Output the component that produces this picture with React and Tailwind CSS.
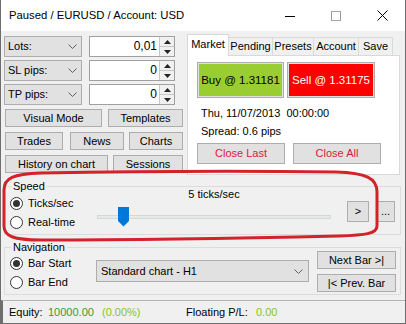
import React from "react";

function Chevron() {
  return (
    <svg width="9" height="5" viewBox="0 0 9 5">
      <path d="M0.5 0.5 L4.5 4.5 L8.5 0.5" stroke="#606060" strokeWidth="1" fill="none" />
    </svg>
  );
}

function Btn({ className = "", children }) {
  return (
    <div className={`flex items-center justify-center border border-[#adadad] bg-[#e1e1e1] ${className}`}>
      {children}
    </div>
  );
}

function Combo({ label }) {
  return (
    <div className="flex h-[21px] w-[78px] items-center justify-between border border-[#adadad] bg-[#e1e1e1] pl-[3px] pr-[4px]">
      <span>{label}</span>
      <Chevron />
    </div>
  );
}

function Spin({ value }) {
  return (
    <div className="flex h-[21px] w-[86px] border border-[#a0a0a0] bg-white">
      <div className="flex flex-1 items-center justify-end pr-[2px] text-[12px]">{value}</div>
      <div className="flex w-[15px] flex-col border-l border-[#c8c8c8]">
        <div className="flex flex-1 items-center justify-center border-b border-[#c8c8c8] bg-[#f0f0f0]">
          <svg width="7" height="4" viewBox="0 0 7 4">
            <path d="M0 4 L3.5 0 L7 4 Z" fill="#222" />
          </svg>
        </div>
        <div className="flex flex-1 items-center justify-center bg-[#f0f0f0]">
          <svg width="7" height="4" viewBox="0 0 7 4">
            <path d="M0 0 L3.5 4 L7 0 Z" fill="#222" />
          </svg>
        </div>
      </div>
    </div>
  );
}

function Radio({ checked, label }) {
  return (
    <div className="flex h-[19px] items-center">
      <div className="flex h-[13px] w-[13px] items-center justify-center rounded-full border border-[#333] bg-white">
        {checked && <div className="h-[7px] w-[7px] rounded-full bg-[#333]" />}
      </div>
      <span className="ml-[5px]">{label}</span>
    </div>
  );
}

function Tab({ active, width, children }) {
  if (active) {
    return (
      <div
        className="relative z-10 -mb-[1px] flex h-[22px] items-center justify-center border-x border-t border-[#d9d9d9] bg-white pb-[2px]"
        style={{ width }}
      >
        {children}
      </div>
    );
  }
  return (
    <div
      className="-ml-[1px] flex h-[18px] items-center justify-center border-x border-t border-[#d9d9d9] bg-[#f0f0f0] first:ml-0"
      style={{ width }}
    >
      {children}
    </div>
  );
}

export default function App() {
  return (
    <div className="relative h-[324px] w-[406px] overflow-hidden border-x border-b border-[#6e6e6e] bg-[#f0f0f0] font-[family-name:'Liberation_Sans',Arial,sans-serif] text-[11px] leading-[13px] text-black">
      {/* title bar */}
      <div className="flex h-[31px] items-center bg-white">
        <div className="flex-1 pl-[8px] text-[11.3px]">Paused / EURUSD / Account: USD</div>
        <div className="flex h-full">
          <div className="flex w-[46px] items-center justify-center">
            <svg width="10" height="10" viewBox="0 0 10 10">
              <path d="M0 5.5 H10" stroke="#000" strokeWidth="1" />
            </svg>
          </div>
          <div className="flex w-[46px] items-center justify-center">
            <svg width="10" height="10" viewBox="0 0 10 10">
              <rect x="0.5" y="0.5" width="9" height="9" fill="none" stroke="#a0a0a0" strokeWidth="1" />
            </svg>
          </div>
          <div className="flex w-[46px] items-center justify-center">
            <svg width="11" height="11" viewBox="0 0 11 11">
              <path d="M0.5 0.5 L10.5 10.5 M10.5 0.5 L0.5 10.5" stroke="#000" strokeWidth="1" />
            </svg>
          </div>
        </div>
      </div>

      {/* top section */}
      <div className="flex">
        <div className="w-[186px] pl-[3px] pt-[5px]">
          <div className="flex gap-[7px]">
            <Combo label="Lots:" />
            <Spin value="0,01" />
          </div>
          <div className="mt-[3px] flex gap-[7px]">
            <Combo label="SL pips:" />
            <Spin value="0" />
          </div>
          <div className="mt-[3px] flex gap-[7px]">
            <Combo label="TP pips:" />
            <Spin value="0" />
          </div>
          <div className="ml-[1px] mt-[4px] flex">
            <Btn className="h-[18px] w-[97px]">Visual Mode</Btn>
            <Btn className="ml-[6px] h-[18px] w-[75px]">Templates</Btn>
          </div>
          <div className="ml-[1px] mt-[5px] flex">
            <Btn className="h-[18px] w-[58px]">Trades</Btn>
            <Btn className="ml-[7px] h-[18px] w-[54px]">News</Btn>
            <Btn className="ml-[5px] h-[18px] w-[54px]">Charts</Btn>
          </div>
          <div className="ml-[1px] mt-[5px] flex">
            <Btn className="h-[18px] w-[103px]">History on chart</Btn>
            <Btn className="ml-[5px] h-[18px] w-[70px]">Sessions</Btn>
          </div>
        </div>

        <div className="w-[213px] pt-[3px]">
          <div className="flex h-[21px] items-end">
            <Tab active width={42}>Market</Tab>
            <Tab width={45}>Pending</Tab>
            <Tab width={42}>Presets</Tab>
            <Tab width={46}>Account</Tab>
            <Tab width={35}>Save</Tab>
          </div>
          <div className="h-[120px] border border-[#d9d9d9] bg-white pl-[9px] pt-[6px]">
            <div className="flex">
              <div className="h-[36px] w-[87px] border border-[#adadad] bg-[#e1e1e1] p-[1px]">
                <div className="flex h-full items-center justify-center bg-[#9acd32] text-[11.5px]">Buy @ 1.31181</div>
              </div>
              <div className="ml-[3px] h-[36px] w-[88px] border border-[#adadad] bg-[#e1e1e1] p-[1px]">
                <div className="flex h-full items-center justify-center bg-[#ff0000] text-[11.5px] text-white">Sell @ 1.31175</div>
              </div>
            </div>
            <div className="ml-[4px] mt-[9px] whitespace-pre">Thu, 11/07/2013  00:00:00</div>
            <div className="ml-[4px] mt-[5px]">Spread: 0.6 pips</div>
            <div className="mt-[5px] flex text-[#d81b3c]">
              <Btn className="h-[21px] w-[88px]">Close Last</Btn>
              <Btn className="ml-[8px] h-[21px] w-[88px]">Close All</Btn>
            </div>
          </div>
        </div>
      </div>

      {/* speed group */}
      <div className="relative ml-[3px] mt-[11px] flex h-[49px] w-[397px] border border-[#dcdcdc]">
        <span className="absolute -top-[7px] left-[6px] bg-[#f0f0f0] px-[2px]">Speed</span>
        <div className="ml-[5px] w-[87px] pt-[7px]">
          <Radio checked label="Ticks/sec" />
          <Radio label="Real-time" />
        </div>
        <div className="w-[234px] pt-[1px]">
          <div className="text-center">5 ticks/sec</div>
          <div className="relative mt-[6px] h-[20px]">
            <div className="absolute left-0 right-0 top-[8px] h-[4px] border border-[#d6d6d6] bg-[#e7eaea]" />
            <svg className="absolute left-[21px] top-0" width="11" height="20" viewBox="0 0 11 20">
              <path d="M0 0 H11 V14 L5.5 19.5 L0 14 Z" fill="#0078d7" />
            </svg>
          </div>
        </div>
        <Btn className="ml-[16px] mt-[14px] h-[21px] w-[22px]">&gt;</Btn>
        <Btn className="ml-[7px] mt-[14px] h-[21px] w-[19px]">...</Btn>
      </div>

      {/* navigation group */}
      <div className="relative ml-[3px] mt-[12px] flex h-[48px] w-[397px] border border-[#dcdcdc]">
        <span className="absolute -top-[7px] left-[6px] bg-[#f0f0f0] px-[2px]">Navigation</span>
        <div className="ml-[5px] w-[86px] pt-[6px]">
          <Radio checked label="Bar Start" />
          <Radio label="Bar End" />
        </div>
        <div className="mt-[12px] flex h-[22px] w-[213px] items-center justify-between border border-[#adadad] bg-[#e1e1e1] pl-[4px] pr-[5px]">
          <span>Standard chart - H1</span>
          <Chevron />
        </div>
        <div className="ml-[8px] w-[79px] pt-[3px]">
          <Btn className="h-[18px]">Next Bar &gt;|</Btn>
          <Btn className="mt-[5px] h-[18px]">|&lt; Prev. Bar</Btn>
        </div>
      </div>

      {/* status bar */}
      <div className="mt-[5px] flex h-[23px] items-center border-l-2 border-t border-l-[#6e6e6e] border-t-[#b4b4b4] pl-[6px]">
        <span className="w-[39px]">Equity:</span>
        <span className="w-[54px] text-[#2f9e36]">10000.00</span>
        <span className="w-[84px] text-[#8dc21f]">(0.00%)</span>
        <span className="w-[70px]">Floating P/L:</span>
        <span className="text-[#8dc21f]">0.00</span>
      </div>

      {/* red annotation drawn over the speed group */}
      <svg className="pointer-events-none absolute left-0 top-0" width="406" height="324" viewBox="0 0 406 324">
        <path
          d="M40 173 C150 171 260 171 335 172 C365 173 376 178 376 192 L376 226 C376 234 364 235 338 236 C250 238 140 240 40 240 C12 240 3 236 3 226 L3 190 C3 178 12 174 40 173 Z"
          fill="none"
          stroke="#d3222a"
          strokeWidth="3"
        />
      </svg>
    </div>
  );
}
